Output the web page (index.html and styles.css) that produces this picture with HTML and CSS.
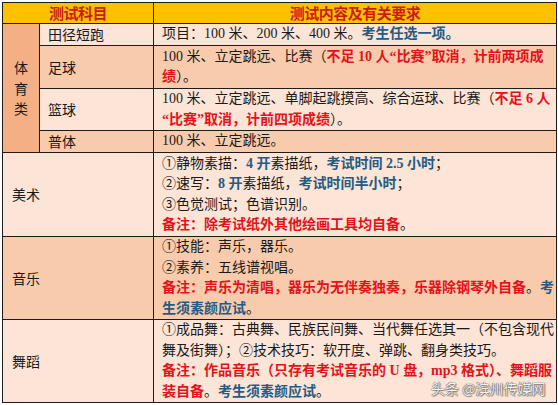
FILE: index.html
```html
<!DOCTYPE html>
<html lang="zh-CN">
<head>
<meta charset="utf-8">
<link rel="stylesheet" href="styles.css">
</head>
<body>
<div class="wrap">
<table class="tbl">
  <colgroup><col class="c1"><col class="c2"><col class="c3"></colgroup>
  <tr class="head">
    <th colspan="2">测试科目</th>
    <th>测试内容及有关要求</th>
  </tr>
  <tr class="h1 light">
    <td rowspan="4" class="cat">体<br>育<br>类</td>
    <td class="sub">田径短跑</td>
    <td class="txt">项目：100 米、200 米、400 米。<span class="b">考生任选一项。</span></td>
  </tr>
  <tr class="h2 mid">
    <td class="sub">足球</td>
    <td class="txt">100 米、立定跳远、比赛（<span class="r">不足 10 人“比赛”取消，计前两项成</span><br><span class="r">绩</span>）。</td>
  </tr>
  <tr class="h3 light">
    <td class="sub">篮球</td>
    <td class="txt">100 米、立定跳远、单脚起跳摸高、综合运球、比赛（<span class="r">不足 6 人</span><br><span class="r">“比赛”取消，计前四项成绩</span>）。</td>
  </tr>
  <tr class="h4 mid">
    <td class="sub">普体</td>
    <td class="txt">100 米、立定跳远。</td>
  </tr>
  <tr class="h5 light">
    <td colspan="2" class="sub big">美术</td>
    <td class="txt">①静物素描：<span class="b">4 开</span>素描纸，<span class="b">考试时间 2.5 小时</span>；<br>②速写：<span class="b">8 开</span>素描纸，<span class="b">考试时间半小时</span>；<br>③色觉测试；色谱识别。<br><span class="r">备注：除考试纸外其他绘画工具均自备</span>。</td>
  </tr>
  <tr class="h6 mid">
    <td colspan="2" class="sub big">音乐</td>
    <td class="txt">①技能：声乐，器乐。<br>②素养：五线谱视唱。<br><span class="r">备注：声乐为清唱，器乐为无伴奏独奏，乐器除钢琴外自备</span>。<span class="b">考</span><br><span class="b">生须素颜应试</span>。</td>
  </tr>
  <tr class="h7 light">
    <td colspan="2" class="sub big">舞蹈</td>
    <td class="txt">①成品舞：古典舞、民族民间舞、当代舞任选其一（不包含现代<br>舞及街舞）；②技术技巧：软开度、弹跳、翻身类技巧。<br><span class="r">备注：作品音乐（只存有考试音乐的 U 盘，mp3 格式）、舞蹈服</span><br><span class="r">装自备</span>。<span class="b">考生须素颜应试</span>。</td>
  </tr>
</table>
<div class="mark">头条 @滨州传媒网</div>
</div>
</body>
</html>
```

FILE: styles.css
```css
html, body {
  margin: 0;
  padding: 0;
  background: #ffffff;
}
.wrap {
  position: relative;
  width: 558px;
  height: 405px;
  padding: 2px 0 0 2px;
  box-sizing: border-box;
}
.tbl {
  border-collapse: collapse;
  table-layout: fixed;
  width: 554px;
  font-family: "Liberation Serif", "Noto Sans CJK SC", sans-serif;
  font-size: 14px;
  color: #1a1a1a;
}
.c1 { width: 37px; }
.c2 { width: 114px; }
.c3 { width: 403px; }
.tbl th, .tbl td {
  border: 1px solid #1c1c1c;
  padding: 0;
  line-height: 20.5px;
  vertical-align: middle;
  white-space: nowrap;
  overflow: hidden;
}
.head th {
  background: #ffc000;
  color: #cc1a1a;
  font-family: "Noto Sans CJK SC", sans-serif;
  font-weight: 700;
  font-size: 15px;
  height: 20px;
  line-height: 20px;
  text-align: center;
  letter-spacing: -0.5px;
}
.light td { background: #fce4d6; }
.mid td { background: #f8cbad; }
.tbl td.cat {
  background: #f4b084;
  text-align: center;
  font-family: "Noto Sans CJK SC", sans-serif;
}
.sub {
  padding-left: 8px !important;
  font-family: "Noto Sans CJK SC", sans-serif;
}
.big { padding-left: 9px !important; }
.txt {
  padding-left: 8px !important;
}
.h1 td { height: 21px; }
.h2 td { height: 42px; }
.h3 td { height: 41px; }
.h4 td { height: 21px; }
.h5 td { height: 83px; }
.h6 td { height: 82px; }
.h7 td { height: 81px; }
.r {
  color: #e3131b;
  font-weight: 700;
}
.b {
  color: #235b84;
  font-weight: 700;
}
.mark {
  position: absolute;
  left: 431px;
  top: 378px;
  font-family: "Noto Sans CJK SC", sans-serif;
  font-size: 14px;
  color: #f2f2f2;
  text-shadow: 0 0 1px #444, 0 0 1px #444, 1px 1px 1px rgba(0,0,0,0.35);
  white-space: nowrap;
}
```
